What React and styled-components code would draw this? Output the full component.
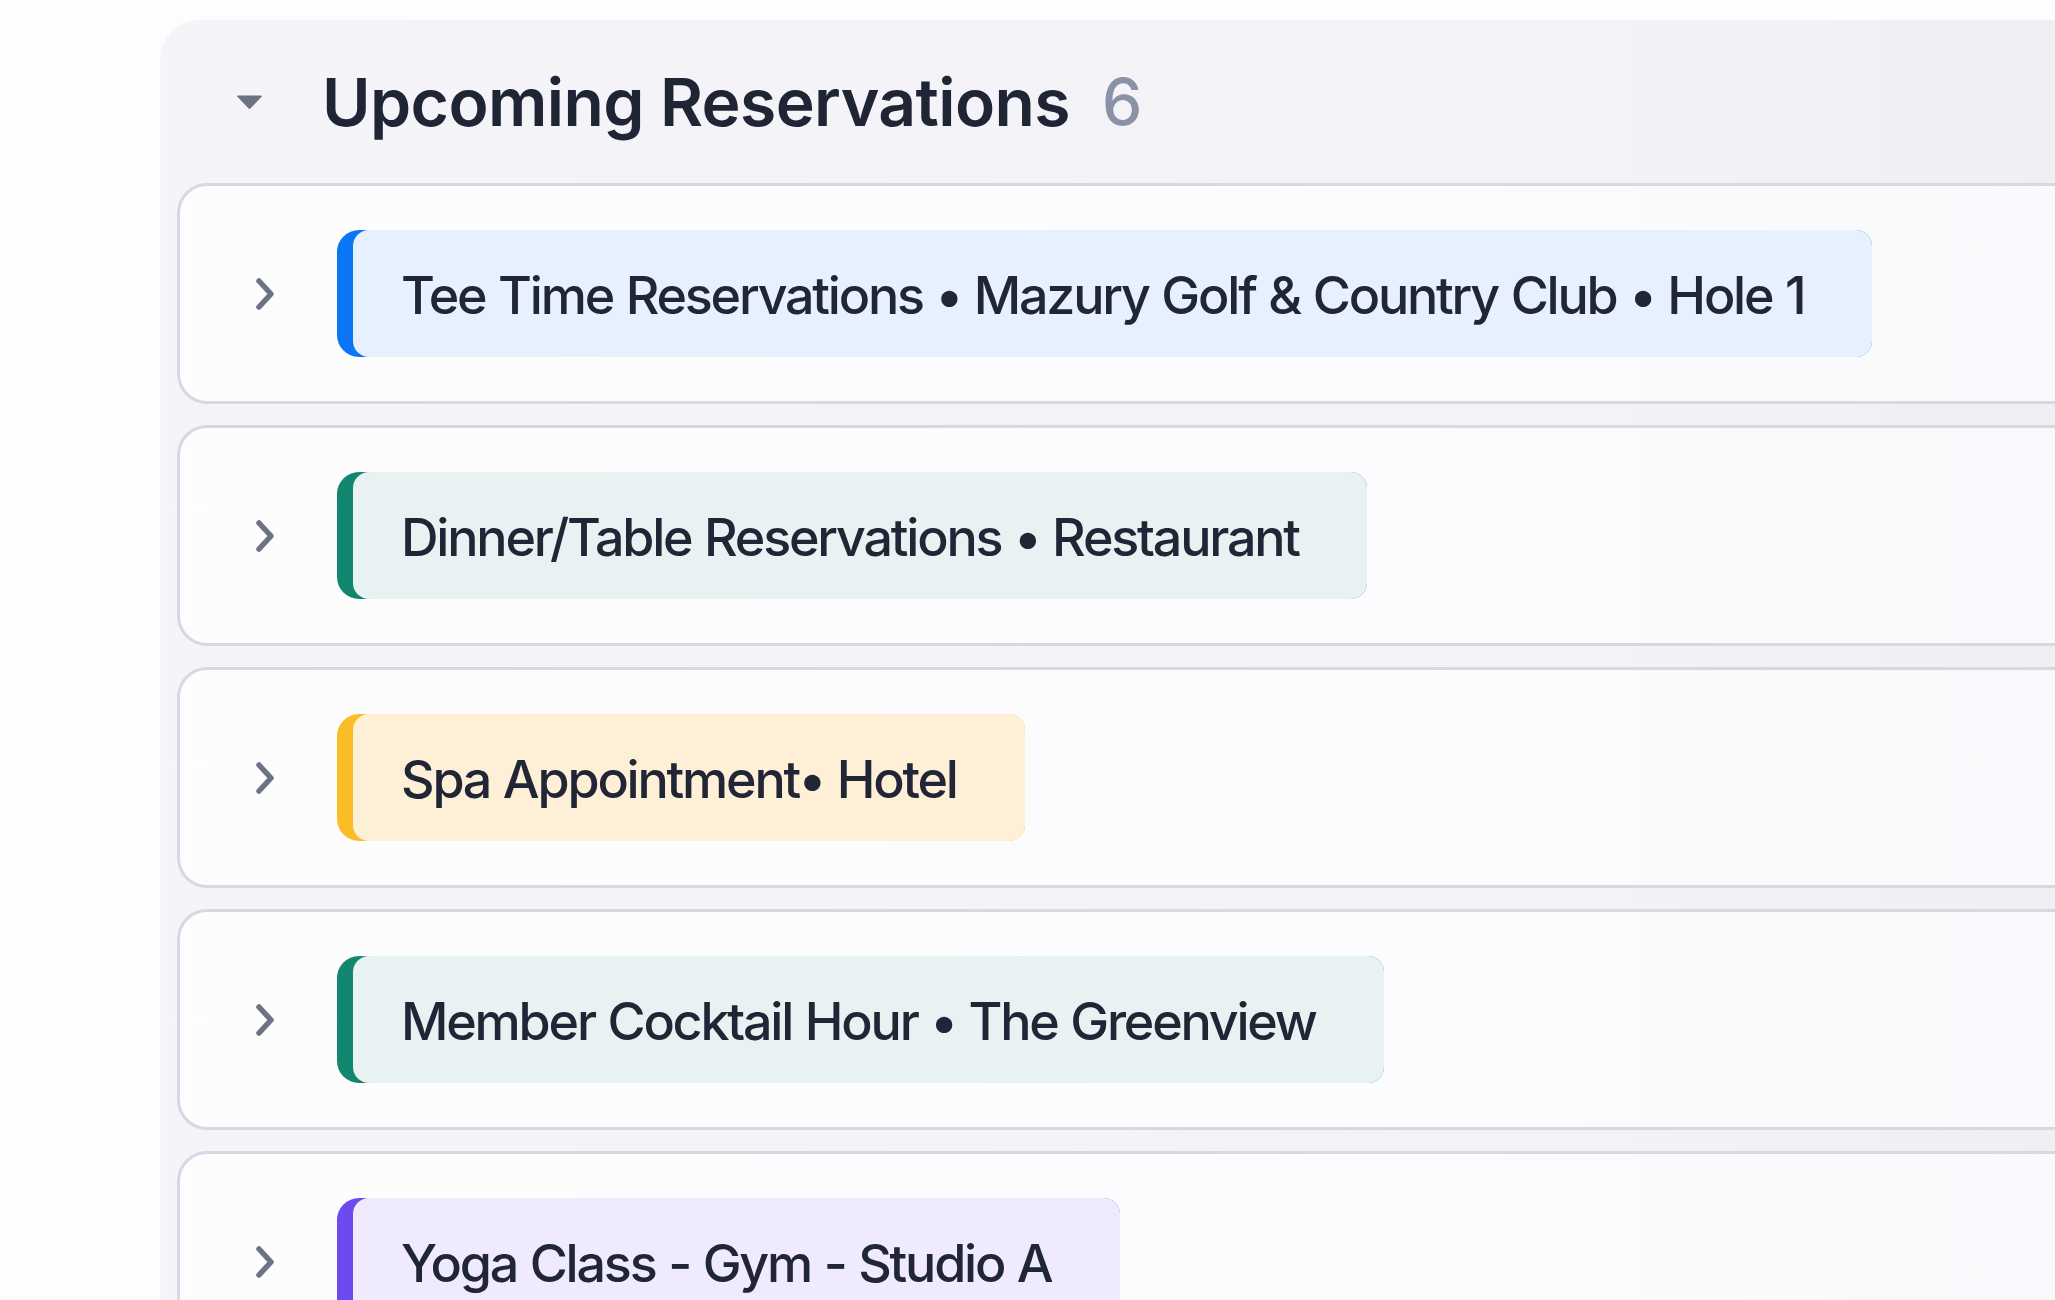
import React from "react";
import styled, { createGlobalStyle } from "styled-components";

// Page reset

const GlobalStyle = createGlobalStyle`
  html, body {
    margin: 0;
    padding: 0;
    background: #fdfdfe;
    overflow: hidden;
    font-family: 'Inter', 'Liberation Sans', sans-serif;
  }
`;

// Page wrapper

const Page = styled.div`
  width: 2055px;
  height: 1300px;
  overflow: hidden;
  padding: 20px 0 0 160px;
  box-sizing: border-box;
`;

// Section panel

const Panel = styled.section`
  width: 2100px;
  min-height: 1400px;
  background: linear-gradient(90deg, #f5f5f9 0%, #f3f3f7 70%, #eeeef2 100%);
  border-radius: 40px 0 0 0;
  padding: 0 0 0 17px;
  box-sizing: border-box;
`;

// Header

const Header = styled.div`
  display: flex;
  align-items: center;
  height: 163px;
  padding-left: 59px;
`;

const Caret = styled.svg`
  width: 27px;
  height: 16px;
  margin-right: 59px;
  flex-shrink: 0;
`;

const Title = styled.h2`
  margin: 0;
  font-size: 66px;
  font-weight: 600;
  color: #202536;
  letter-spacing: -0.6px;
`;

const Count = styled.span`
  margin-left: 32px;
  font-size: 64px;
  font-weight: 500;
  color: #8a92a6;
`;

// List of cards

const List = styled.div`
  display: flex;
  flex-direction: column;
  gap: 21px;
`;

const Card = styled.div`
  display: flex;
  align-items: center;
  padding: 44px 0 44px 75px;
  border: 3px solid #d6d9e3;
  border-right: none;
  border-radius: 30px 0 0 30px;
  background: linear-gradient(90deg, #fdfdfe 0%, #fcfcfe 60%, #f8f8fc 100%);
`;

const Chevron = styled.svg`
  width: 20px;
  height: 34px;
  margin-right: 62px;
  flex-shrink: 0;
`;

// Colored tag

const Tag = styled.div`
  display: flex;
  height: 127px;
  padding-left: 16px;
  border-radius: 22px 16px 16px 22px;
  background: ${(p) => p.accent};
`;

const Label = styled.div`
  display: flex;
  align-items: center;
  padding: 4px 68px 0 48px;
  border-radius: 16px;
  background: ${(p) => p.tint};
  font-size: 52px;
  font-weight: 500;
  color: #212636;
  letter-spacing: -2.2px;
  word-spacing: 1px;
  white-space: pre;
`;

const reservations = [
  {
    text: "Tee Time Reservations \u2022 Mazury Golf & Country Club \u2022 Hole 1",
    accent: "#0a76f5",
    tint: "#e6f0fe",
  },
  {
    text: "Dinner/Table Reservations \u2022 Restaurant",
    accent: "#12866f",
    tint: "#e8f2f2",
  },
  {
    text: "Spa Appointment\u2022 Hotel",
    accent: "#fbbd26",
    tint: "#fef0d7",
  },
  {
    text: "Member Cocktail Hour \u2022 The Greenview",
    accent: "#12866f",
    tint: "#e8f2f2",
  },
  {
    text: "Yoga Class - Gym - Studio A",
    accent: "#6d4af0",
    tint: "#efebfd",
  },
  {
    text: "Tennis Lesson \u2022 Court 2",
    accent: "#0a76f5",
    tint: "#e6f0fe",
  },
];

const App = () => {
  return (
    <Page>
      <GlobalStyle />
      <Panel>
        <Header>
          <Caret viewBox="0 0 27 16">
            <path d="M2 1.5 H25 Q26.5 1.5 25.6 2.8 L14.4 14.6 Q13.5 15.5 12.6 14.6 L1.4 2.8 Q0.5 1.5 2 1.5 Z" fill="#6b7385" />
          </Caret>
          <Title>Upcoming Reservations</Title>
          <Count>6</Count>
        </Header>
        <List>
          {reservations.map((r, i) => (
            <Card key={i}>
              <Chevron viewBox="0 0 20 34">
                <path
                  d="M4 4 L16 17 L4 30"
                  fill="none"
                  stroke="#6b7385"
                  strokeWidth="5.5"
                  strokeLinecap="round"
                  strokeLinejoin="round"
                />
              </Chevron>
              <Tag accent={r.accent}>
                <Label tint={r.tint}>{r.text}</Label>
              </Tag>
            </Card>
          ))}
        </List>
      </Panel>
    </Page>
  );
};

export default App;
